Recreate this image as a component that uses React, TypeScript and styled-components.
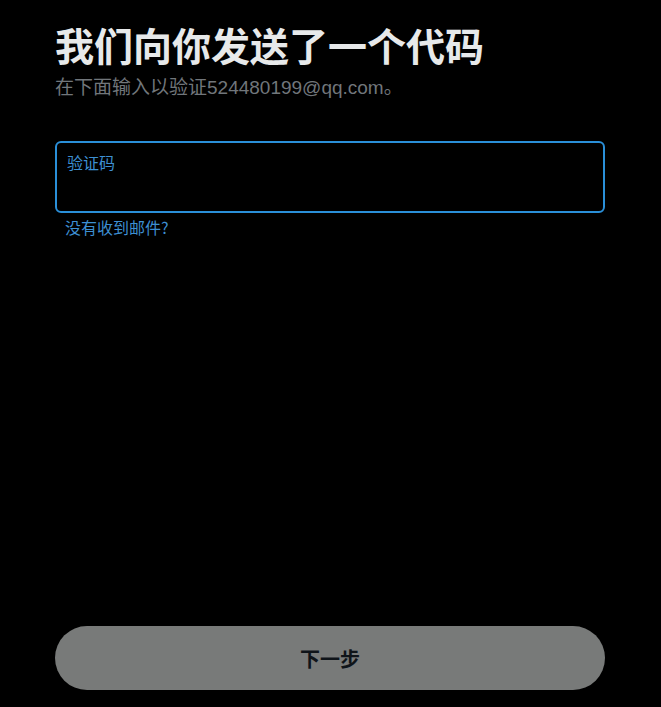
import React from "react"
import styled, { createGlobalStyle } from "styled-components"

const GlobalStyle = createGlobalStyle`
  html, body {
    margin: 0;
    padding: 0;
    background: #000;
  }
  body {
    font-family: "Liberation Sans", "Noto Sans CJK SC", sans-serif;
  }
`

const Page = styled.div`
  display: flex;
  flex-direction: column;
  box-sizing: border-box;
  min-height: 707px;
  padding: 20px 56px 17px 55px;
  background: #000;
`

const Title = styled.h1`
  margin: 0;
  font-family: "Noto Sans CJK SC", sans-serif;
  font-size: 39px;
  font-weight: 700;
  line-height: 48px;
  color: #e7e9ea;
`

const Subtitle = styled.p`
  margin: 8px 0 0;
  font-size: 19px;
  line-height: 24px;
  color: #71767b;
`

const Field = styled.label`
  display: flex;
  flex-direction: column;
  box-sizing: border-box;
  height: 72px;
  margin-top: 41px;
  padding: 8px 10px;
  border: 2px solid #2a8fd8;
  border-radius: 6px;
`

const FieldLabel = styled.span`
  font-family: "Noto Sans CJK SC", sans-serif;
  font-size: 16px;
  line-height: 22px;
  color: #3d8fd2;
`

const FieldInput = styled.input`
  margin-top: 4px;
  padding: 0;
  border: none;
  outline: none;
  background: transparent;
  color: #e7e9ea;
  font-size: 17px;
`

const HelpLink = styled.a`
  align-self: flex-start;
  margin: 3px 0 0 10px;
  font-family: "Noto Sans CJK SC", sans-serif;
  font-size: 16px;
  line-height: 22px;
  color: #3d8fd2;
  text-decoration: none;
  cursor: pointer;
`

const NextButton = styled.button`
  margin-top: auto;
  height: 64px;
  border: none;
  border-radius: 32px;
  background: #787a79;
  color: #0f1419;
  font-family: "Noto Sans CJK SC", sans-serif;
  font-size: 20px;
  font-weight: 700;
  cursor: default;
`

export default function App() {
  return (
    <>
      <GlobalStyle />
      <Page>
        <Title>我们向你发送了一个代码</Title>
        <Subtitle>在下面输入以验证524480199@qq.com。</Subtitle>
        <Field>
          <FieldLabel>验证码</FieldLabel>
          <FieldInput type="text" />
        </Field>
        <HelpLink>没有收到邮件?</HelpLink>
        <NextButton disabled>下一步</NextButton>
      </Page>
    </>
  )
}
